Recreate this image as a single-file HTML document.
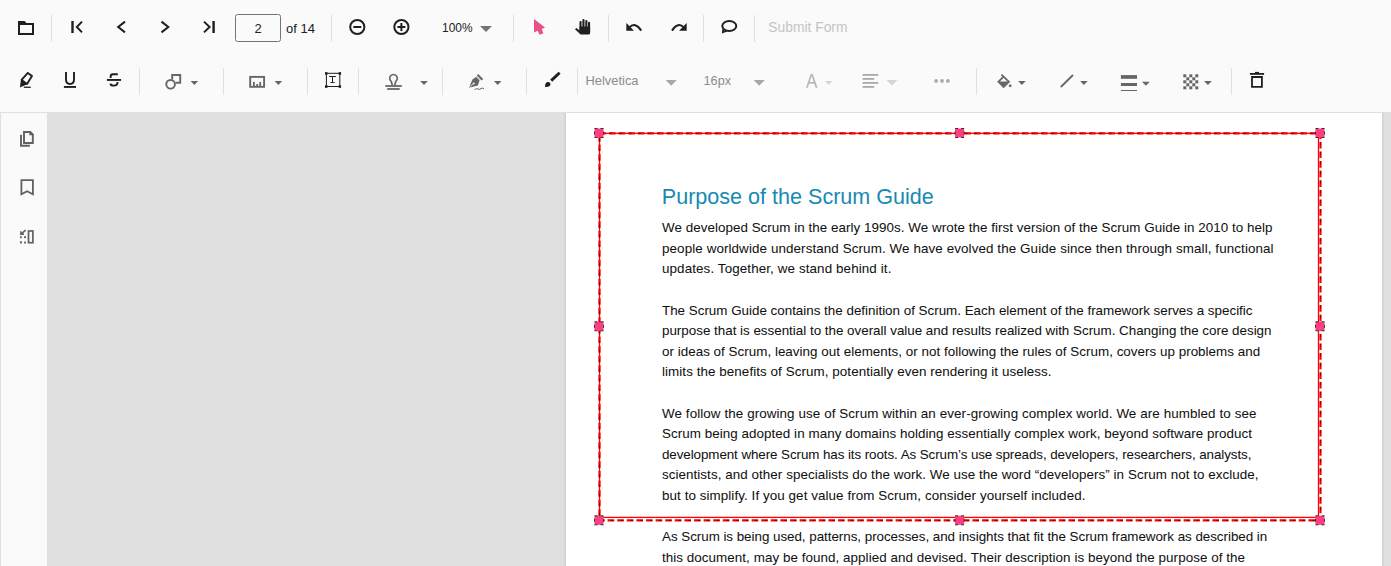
<!DOCTYPE html>
<html><head><meta charset="utf-8">
<style>
html,body{margin:0;padding:0;width:1391px;height:566px;overflow:hidden;background:#fafafa;font-family:"Liberation Sans",sans-serif;}
#tb{position:absolute;left:0;top:0;width:1391px;height:112px;background:#fafafa;border-bottom:1px solid #e0e0e0;}
#side{position:absolute;left:0;top:113px;width:46px;height:453px;background:#fafafa;border-left:1px solid #e0e0e0;}
#view{position:absolute;left:47px;top:113px;width:1344px;height:453px;background:#e0e0e0;overflow:hidden;}
#page{position:absolute;left:519px;top:-20px;width:816px;height:600px;background:#fff;box-shadow:0 0 3px rgba(0,0,0,0.16);}
svg{position:absolute;left:0;top:0;}
</style></head><body>
<div id="tb">
<svg width="1391" height="112" viewBox="0 0 1391 112">
<g fill="#e0e0e0">
<rect x="51" y="15" width="1" height="27"/>
<rect x="331" y="15" width="1" height="27"/>
<rect x="513" y="15" width="1" height="27"/>
<rect x="608" y="15" width="1" height="27"/>
<rect x="703" y="15" width="1" height="27"/>
<rect x="754" y="15" width="1" height="27"/>
<rect x="139" y="68" width="1" height="27"/>
<rect x="223" y="68" width="1" height="27"/>
<rect x="307" y="68" width="1" height="27"/>
<rect x="358" y="68" width="1" height="27"/>
<rect x="442" y="68" width="1" height="27"/>
<rect x="526" y="68" width="1" height="27"/>
<rect x="577" y="68" width="1" height="27"/>
<rect x="976" y="68" width="1" height="27"/>
<rect x="1231" y="68" width="1" height="27"/>
</g>

<!-- row1 -->
<g fill="#1f1f1f">
<path fill-rule="evenodd" d="M18 21 H24.6 L26.4 23 H34 V35 H18 Z M20 25 V33 H32 V25 Z"/>
<rect x="71.3" y="21" width="2.4" height="12"/>
<rect x="212.4" y="21" width="2.4" height="12"/>
</g>
<g fill="none" stroke="#1f1f1f" stroke-width="2" stroke-linecap="butt" stroke-linejoin="miter">
<polyline points="82,21.6 76.8,27 82,32.4"/>
<polyline points="125,21.6 118.2,27 125,32.4"/>
<polyline points="161.5,21.6 168.3,27 161.5,32.4"/>
<polyline points="204,21.6 209.6,27 204,32.4"/>
<circle cx="357.3" cy="27" r="7.1"/>
<circle cx="401.4" cy="27" r="7.1"/>
<path d="M353.3 27 H361.3 M397.4 27 H405.4 M401.4 23 V31"/>
<path d="M629.2 27.6 Q635.2 21.4 641.2 30.6"/>
<path d="M684 27.6 Q678 21.4 672 30.6"/>
<ellipse cx="729.3" cy="26" rx="7" ry="5"/>
</g>
<g fill="#1f1f1f">
<path d="M626.3 23 V30.8 H634 Z"/>
<path d="M686.7 23 V30.8 H679 Z"/>
<path d="M722.3 28.8 L721.9 33.6 L727.4 31.6 L725.6 30.6 L724.2 31.2 L724.3 30 Z"/>
<rect x="579.5" y="21" width="2.1" height="11" rx="1"/>
<rect x="582.4" y="19" width="2.1" height="11" rx="1"/>
<rect x="585.3" y="19.9" width="2.1" height="11" rx="1"/>
<rect x="588" y="21.8" width="2.1" height="11" rx="1"/>
<path d="M579.5 26.5 H590.1 V33 Q590.1 34.6 588.5 34.6 H580.6 L575 29.2 L576.4 27.9 L579.5 30.6 Z"/>
</g>
<path fill="#e8508a" d="M534 19 L545 27.5 L541.8 29 L543.4 33.3 L539.6 34.7 L537.6 30.8 L534 32.5 Z"/>
<rect x="235.5" y="14.5" width="45" height="27" rx="2" fill="#fafafa" stroke="#757575" stroke-width="1"/>
<text x="258" y="32.5" font-size="13" text-anchor="middle" fill="#212121">2</text>
<text x="286" y="32.5" font-size="13" fill="#212121">of 14</text>
<text x="442" y="32.3" font-size="13" fill="#212121" textLength="30.5" lengthAdjust="spacingAndGlyphs">100%</text>
<path d="M480 26 H492 L486 32 Z" fill="#757575"/>
<text x="768.3" y="32.2" font-size="14" fill="#c4c4c4" textLength="79.2" lengthAdjust="spacingAndGlyphs">Submit Form</text>

<!-- row2 -->
<g fill="none" stroke="#1f1f1f" stroke-width="1.9">
<path d="M21.6 79.9 L27.8 72.9 L32 75.9 L27 83.9 Z" stroke-linejoin="round"/>
<path d="M66 72 V79.6 Q66 84 70 84 Q74 84 74 79.6 V72"/>
<path d="M117.8 74.3 H113 Q110.6 74.3 110.6 76.8 V78"/>
<path d="M110.4 83.6 Q110.6 85.6 113.8 85.6 Q117.5 85.6 117.5 82.6 V82"/>
</g>
<g fill="#1f1f1f">
<path d="M21 79.6 L19.9 87.5 L27.2 84.3 Z"/>
<rect x="23.8" y="86.6" width="7" height="1.3"/>
<rect x="63.9" y="86" width="12.1" height="1.9"/>
<rect x="106.9" y="79" width="14.2" height="1.9"/>
</g>
<g fill="none" stroke="#666" stroke-width="1.9">
<path d="M172.2 79.6 V75 H180.2 V82.7 H175.6"/>
<circle cx="170.6" cy="84.3" r="4.35"/>
<rect x="250.2" y="76.9" width="13.9" height="9.9"/>
<path d="M392.3 85.2 L391.2 81.3 A3.78 3.78 0 1 1 395.8 81.3 L394.7 85.2" stroke-width="1.7"/>
<path d="M1001.4 74.6 L1009 81.8 L1003.7 87 L998.4 81.8 L1003.3 76.9" stroke-width="1.7" stroke-linejoin="miter"/>
<path d="M1060.8 87 L1073 75" stroke-width="1.8"/>
</g>
<g fill="#666">
<path d="M190.6 81.1 H198.2 L194.4 85.1 Z"/>
<path d="M274.6 81.1 H282.2 L278.4 85.1 Z"/>
<path d="M420.1 81.1 H427.9 L424 85.1 Z"/>
<path d="M493.9 81.1 H501.5 L497.7 85.1 Z"/>
<path d="M1018.1 81.1 H1025.7 L1021.9 85.1 Z"/>
<path d="M1080.1 81.1 H1087.7 L1083.9 85.1 Z"/>
<path d="M1142 81.7 H1149.8 L1145.9 85.7 Z"/>
<path d="M1204 81.1 H1211.8 L1207.9 85.1 Z"/>
<rect x="253" y="81.9" width="1.8" height="4"/>
<rect x="256.3" y="84" width="1.8" height="2"/>
<rect x="259.3" y="81.9" width="1.8" height="4"/>
<rect x="385.3" y="85.1" width="16.5" height="1.8"/>
<rect x="387.2" y="88.1" width="12.5" height="1.8"/>
<path d="M472.4 79.4 L476.6 76.4 L479.8 79.8 L477.8 85.4 L469 87.8 Z M472.7 83.4 a1 1 0 1 0 2 0 a1 1 0 1 0 -2 0 Z" fill-rule="evenodd"/>
<path d="M476.8 75.6 L478.2 74 L483.2 79 L481.6 80.4 Z"/>
<path d="M476.2 76.6 L480.2 80.6 M469.6 87.2 L473.4 83.4" stroke="#fafafa" stroke-width="0.8" fill="none"/>
<path d="M998.4 81.6 H1009 L1003.7 86.9 Z"/>
<circle cx="1010.2" cy="85.8" r="1.4"/>
<rect x="1120.9" y="75.1" width="16.1" height="3.7"/>
<rect x="1120.9" y="83" width="16.1" height="3"/>
<rect x="1120.9" y="90" width="16.1" height="1"/>
</g>
<path d="M474.6 89.6 Q476.5 88 478 89 Q479.5 90 481 88.6 Q482.5 87.4 484 88.8" fill="none" stroke="#666" stroke-width="1"/>
<g fill="#666">
<rect x="1183.3" y="74.3" width="3" height="3"/><rect x="1189.3" y="74.3" width="3" height="3"/><rect x="1195.3" y="74.3" width="3" height="3"/>
<rect x="1186.3" y="77.3" width="3" height="3"/><rect x="1192.3" y="77.3" width="3" height="3"/>
<rect x="1183.3" y="80.3" width="3" height="3"/><rect x="1189.3" y="80.3" width="3" height="3"/><rect x="1195.3" y="80.3" width="3" height="3"/>
<rect x="1186.3" y="83.3" width="3" height="3"/><rect x="1192.3" y="83.3" width="3" height="3"/>
<rect x="1183.3" y="86.3" width="3" height="3"/><rect x="1189.3" y="86.3" width="3" height="3"/><rect x="1195.3" y="86.3" width="3" height="3"/>
</g>
<g fill="#1f1f1f">
<rect x="325" y="72.2" width="2.5" height="2.5"/><rect x="338.6" y="72.2" width="2.5" height="2.5"/>
<rect x="325" y="85.3" width="2.5" height="2.5"/><rect x="338.6" y="85.3" width="2.5" height="2.5"/>
<rect x="325.8" y="72.8" width="14.6" height="1"/><rect x="325.8" y="86" width="14.6" height="1"/>
<rect x="325.9" y="72.8" width="1" height="14.4"/><rect x="339.3" y="72.8" width="1" height="14.4"/>
<rect x="329.1" y="76" width="6.8" height="1"/><rect x="332" y="76" width="1" height="6.8"/><rect x="330.3" y="82.1" width="4.4" height="0.9"/>
<path d="M551.2 80.6 L559.6 72.8" stroke="#1f1f1f" stroke-width="2.9" stroke-linecap="butt"/>
<path d="M544.9 87 Q545 83.2 546.6 82.3 Q548.4 81.5 549.8 82.6 Q551 83.8 550.2 85.4 Q549 87 544.9 87 Z"/>
<rect x="1249.9" y="73" width="14.2" height="1.8"/>
<rect x="1255" y="71.9" width="4" height="1.5"/>
<path fill-rule="evenodd" d="M1251.1 76 H1262.8 V87.8 H1251.1 Z M1252.9 77.9 V85.9 H1261 V77.9 Z"/>
</g>
<text x="585.5" y="85.2" font-size="13" fill="#8c8c8c" textLength="53" lengthAdjust="spacingAndGlyphs">Helvetica</text>
<text x="703.5" y="85.2" font-size="13" fill="#8c8c8c" textLength="27.6" lengthAdjust="spacingAndGlyphs">16px</text>
<path d="M665.6 80 H676.8 L671.2 85.8 Z" fill="#a8a8a8"/>
<path d="M753.6 80 H764.8 L759.2 85.8 Z" fill="#a8a8a8"/>
<path d="M806 87.7 L810.6 74.1 H812.8 L817.6 87.7 H815.6 L814.3 83.8 H809.1 L807.8 87.7 Z M809.7 82 H813.7 L811.7 76 Z" fill="#b8b8b8" fill-rule="evenodd"/>
<path d="M825 81.1 H832.4 L828.7 84.7 Z" fill="#d4d4d4"/>
<g fill="#aaaaaa">
<rect x="862.6" y="74" width="15.7" height="1.8"/>
<rect x="862.6" y="78" width="11.6" height="1.8"/>
<rect x="862.6" y="82" width="15.7" height="1.8"/>
<rect x="862.6" y="86" width="11.6" height="1.8"/>
<circle cx="936.1" cy="80.9" r="1.9"/><circle cx="942" cy="80.9" r="1.9"/><circle cx="947.9" cy="80.9" r="1.9"/>
</g>
<path d="M886.5 80 H897.3 L891.9 85.4 Z" fill="#d4d4d4"/>

</svg>
</div>
<div id="side">
<svg width="47" height="453" viewBox="0 113 47 453" style="left:-1px">
<g fill="none" stroke="#616161" stroke-width="1.9">
<path d="M24 143 V132 H30.2 L32.8 134.6 V143 Z"/>
<path d="M21 134.8 V145.8 H29.8"/>
<path d="M21.4 194.2 V180.1 H32.9 V194.2 L27.15 191.2 Z" stroke-linejoin="miter" stroke-width="1.8"/>
<rect x="28.5" y="231" width="4.4" height="11.7" stroke-width="1.7"/>
</g>
<g fill="#616161">
<path d="M29.3 131.2 H30.6 L33.7 134.3 V135.3 H29.3 Z"/>
<rect x="20" y="236.3" width="1.8" height="1.9"/><rect x="20" y="241.2" width="1.8" height="2.3"/>
<rect x="24.1" y="236.2" width="1.9" height="1.9"/><rect x="24.1" y="241.6" width="1.9" height="1.9"/>
</g>
<path d="M20.9 231.2 V234.3 H24 M21.2 234 L25.6 230.2" fill="none" stroke="#616161" stroke-width="1.6"/>
</svg>
</div>
<div id="view">
<div id="page"></div>
<svg width="1391" height="566" viewBox="0 0 1391 566" style="left:-47px;top:-113px">
<text x="661.8" y="204.1" font-size="21.6" fill="#168ab2" textLength="272" lengthAdjust="spacingAndGlyphs">Purpose of the Scrum Guide</text>
<g font-size="13.4" fill="#111" stroke="#111" stroke-width="0.04" lengthAdjust="spacingAndGlyphs" style="white-space:pre">
<text x="662.0" y="232.20" textLength="610.4">We developed Scrum in the early 1990s. We wrote the first version of the Scrum Guide in 2010 to help</text>
<text x="662.0" y="252.80" textLength="611.6">people worldwide understand Scrum.  We have evolved the Guide since then through small, functional</text>
<text x="662.0" y="273.40" textLength="229.4">updates. Together, we stand behind it.</text>
<text x="662.0" y="314.60" textLength="590.5">The Scrum Guide contains the definition of Scrum. Each element of the framework serves a specific</text>
<text x="662.0" y="335.20" textLength="609.5">purpose that is essential to the overall value and results realized with Scrum. Changing the core design</text>
<text x="662.0" y="355.80" textLength="598.1">or ideas of Scrum, leaving out elements, or not following the rules of Scrum, covers up problems and</text>
<text x="662.0" y="376.40" textLength="389.5">limits the benefits of Scrum, potentially even rendering it useless.</text>
<text x="662.0" y="417.60" textLength="594.4">We follow the growing use of Scrum within an ever-growing complex world. We are humbled to see</text>
<text x="662.0" y="438.20" textLength="590.1">Scrum being adopted in many domains holding essentially complex work, beyond software product</text>
<text x="662.0" y="458.80" textLength="589.4">development where Scrum has its roots. As Scrum’s use spreads, developers, researchers, analysts,</text>
<text x="662.0" y="479.40" textLength="596.6">scientists, and other specialists do the work. We use the word “developers” in Scrum not to exclude,</text>
<text x="662.0" y="500.00" textLength="423.4">but to simplify. If you get value from Scrum, consider yourself included.</text>
<text x="662.0" y="541.20" textLength="605.2">As Scrum is being used, patterns, processes, and insights that fit the Scrum framework as described in</text>
<text x="662.0" y="561.80" textLength="583.0">this document, may be found, applied and devised. Their description is beyond the purpose of the</text>
</g>
<rect x="599.5" y="133.3" width="719" height="384.1" fill="none" stroke="#ff0000" stroke-width="1.3"/>
<path d="M599.5 133.3 H1320.5 V520.4 H599.5 Z" fill="none" stroke="#ff0000" stroke-width="2.2" stroke-dasharray="6.6 3"/>
<path d="M599.5 133.3 H1320.5 V520.4 H599.5 Z" fill="none" stroke="#000" stroke-opacity="0.45" stroke-width="1" stroke-dasharray="3.5 6.1"/>
<g fill="#ff3d80" stroke="#333" stroke-width="1" stroke-dasharray="3 3">
<rect x="594.5" y="128.5" width="9" height="9"/>
<rect x="955.1" y="128.5" width="9" height="9"/>
<rect x="1315.5" y="128.5" width="9" height="9"/>
<rect x="594.5" y="321.8" width="9" height="9"/>
<rect x="1315.5" y="321.8" width="9" height="9"/>
<rect x="594.5" y="515.8" width="9" height="9"/>
<rect x="955.1" y="515.8" width="9" height="9"/>
<rect x="1315.5" y="515.8" width="9" height="9"/>
</g>
</svg>
</div>
</body></html>
